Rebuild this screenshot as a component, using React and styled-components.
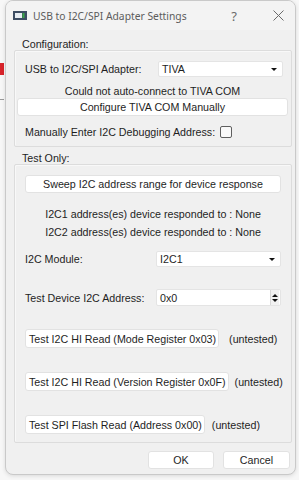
import styled, {createGlobalStyle} from "styled-components"

const Global = createGlobalStyle`
  html, body {
    margin: 0;
    padding: 0;
  }

  body {
    width: 299px;
    height: 480px;
    overflow: hidden;
    background:
      linear-gradient(#d8232a, #d8232a) 0 63px / 4px 12px no-repeat,
      linear-gradient(#9a9a9a, #9a9a9a) 0 99px / 4px 1px no-repeat,
      #f7f7f7;
    font-family: "Liberation Sans", Arial, sans-serif;
  }
`

const Window = styled.div`
  box-sizing: border-box;
  margin-left: 5px;
  width: 291px;
  height: 475px;
  display: flex;
  flex-direction: column;
  background: #f0f0f0;
  border: 1px solid #c9c9c9;
  border-radius: 8px;
  overflow: hidden;
  box-shadow: 0 1px 4px rgba(0, 0, 0, .12);
`

const TitleBar = styled.div`
  height: 29px;
  flex: none;
  display: flex;
  align-items: center;
  padding-left: 7px;
  background: #f3f3f3;
  color: #5c5c5c;
  font-family: "Noto Sans", "Open Sans", sans-serif;
  font-size: 10.3px;

  span.title {
    margin-left: 6px;
    flex: 1;
  }
`

const Caption = styled.button`
  width: ${p => p.$w}px;
  margin-right: ${p => p.$mr || 0}px;
  height: 29px;
  border: 0;
  padding: 0;
  background: transparent;
  color: #6a6a6a;
  font-family: "Noto Sans", sans-serif;
  font-size: 13px;
  display: flex;
  align-items: center;
  justify-content: center;
`

const Body = styled.div`
  flex: 1;
  display: flex;
  flex-direction: column;
  padding: 8px 3px 0 8px;
  font-size: 10.7px;
  color: #1e1e1e;
`

const GroupTitle = styled.div`
  height: 12px;
  line-height: 12px;
  padding-left: 8px;
  margin-top: ${p => p.$gap || 0}px;
`

const Frame = styled.div`
  box-sizing: border-box;
  height: ${p => p.$h}px;
  border: 1px solid #dcdcdc;
  box-shadow: inset 1px 1px 0 #f8f8f8;
  border-radius: 2px;
  display: flex;
  flex-direction: column;
  padding: ${p => p.$pad};
`

const Row = styled.div`
  display: flex;
  align-items: center;
  height: ${p => p.$h || 16}px;
  margin-top: ${p => p.$mt || 0}px;
  padding-left: ${p => p.$pl ?? 8}px;
`

const Label = styled.span`
  width: ${p => p.$w || 133}px;
  flex: none;
`

const Combo = styled.div`
  box-sizing: border-box;
  width: 125px;
  height: 16px;
  display: flex;
  align-items: center;
  justify-content: space-between;
  padding: 0 5px 0 3px;
  background: #fff;
  border: 1px solid #e4e4e4;
  border-radius: 2px;

  &::after {
    content: "";
    border-left: 3px solid transparent;
    border-right: 3px solid transparent;
    border-top: 3px solid #111;
  }
`

const Spin = styled.div`
  box-sizing: border-box;
  width: 125px;
  height: 17px;
  display: flex;
  align-items: center;
  padding-left: 3px;
  background: #fff;
  border: 1px solid #e4e4e4;
  border-radius: 2px;

  span {
    flex: 1;
  }
`

const SpinArrows = styled.div`
  box-sizing: border-box;
  width: 9px;
  height: 15px;
  margin-right: 1px;
  display: flex;
  flex-direction: column;
  align-items: center;
  justify-content: center;
  gap: 2px;
  background: #f1f1f1;
  border-left: 1px solid #d8d8d8;

  i {
    border-left: 3px solid transparent;
    border-right: 3px solid transparent;
  }

  i:first-child {
    border-bottom: 3px solid #111;
  }

  i:last-child {
    border-top: 3px solid #111;
  }
`

const Note = styled.div`
  text-align: center;
  line-height: ${p => p.$lh || 14}px;
  margin-top: ${p => p.$mt || 0}px;
`

const Button = styled.button`
  box-sizing: border-box;
  height: ${p => p.$h || 18}px;
  width: ${p => p.$w ? p.$w + "px" : "auto"};
  margin-top: ${p => p.$mt || 0}px;
  padding: ${p => p.$tight ? "0 2px 0 3px" : "0 4px"};
  background: #fff;
  border: 1px solid #e2e2e2;
  border-radius: 3px;
  font-family: inherit;
  font-size: inherit;
  color: #1e1e1e;
  text-align: center;
  white-space: nowrap;
  flex: none;
`

const Check = styled.span`
  box-sizing: border-box;
  width: 12px;
  height: 12px;
  margin-left: 5px;
  border: 1px solid #5f5f5f;
  border-radius: 2px;
  background: #f9f9f9;
`

const TestRow = styled.div`
  display: flex;
  align-items: center;
  gap: ${p => p.$gap || 10}px;
  margin-top: ${p => p.$mt}px;
`

const Footer = styled.div`
  display: flex;
  justify-content: flex-end;
  gap: 9px;
  margin-top: 8px;
  padding-right: 2px;
`

const AppIcon = () => (
    <svg width="14" height="9" viewBox="0 0 14 9">
        <rect x="0" y="0" width="14" height="9" fill="#3d4d63"/>
        <rect x="2" y="2" width="7" height="5" fill="#e7edf3"/>
        <rect x="9.5" y="2" width="2" height="5" fill="#3aa64a"/>
    </svg>
)

const tests = [
    {text: "Test I2C HI Read (Mode Register 0x03)", mt: 23, gap: 10},
    {text: "Test I2C HI Read (Version Register 0x0F)", mt: 24, gap: 6},
    {text: "Test SPI Flash Read (Address 0x00)", mt: 24, gap: 7},
]

const App = () => {
    return (<>
        <Global/>
        <Window>
            <TitleBar>
                <AppIcon/>
                <span className="title">USB to I2C/SPI Adapter Settings</span>
                <Caption $w={44} $mr={5}>?</Caption>
                <Caption $w={34}>
                    <svg width="11" height="11" viewBox="0 0 11 11">
                        <path d="M0.5 0.5 L10.5 10.5 M10.5 0.5 L0.5 10.5" stroke="#6a6a6a" strokeWidth="1"/>
                    </svg>
                </Caption>
            </TitleBar>
            <Body>
                <GroupTitle>Configuration:</GroupTitle>
                <Frame $h={97} $pad="10px 3px 0 2px">
                    <Row>
                        <Label>USB to I2C/SPI Adapter:</Label>
                        <Combo>TIVA</Combo>
                    </Row>
                    <Note $mt={7}>Could not auto-connect to TIVA COM</Note>
                    <Button $h={18}>Configure TIVA COM Manually</Button>
                    <Row $h={14} $mt={9}>
                        <span>Manually Enter I2C Debugging Address:</span>
                        <Check/>
                    </Row>
                </Frame>
                <GroupTitle $gap={5}>Test Only:</GroupTitle>
                <Frame $h={279} $pad="10px 10px 0 10px">
                    <Button $h={18}>Sweep I2C address range for device response</Button>
                    <Note $lh={18} $mt={12}>I2C1 address(es) device responded to : None</Note>
                    <Note $lh={18}>I2C2 address(es) device responded to : None</Note>
                    <Row $mt={10} $pl={0}>
                        <Label $w={131}>I2C Module:</Label>
                        <Combo>I2C1</Combo>
                    </Row>
                    <Row $h={17} $mt={22} $pl={0}>
                        <Label $w={131}>Test Device I2C Address:</Label>
                        <Spin>
                            <span>0x0</span>
                            <SpinArrows><i/><i/></SpinArrows>
                        </Spin>
                    </Row>
                    {tests.map(t => (
                        <TestRow key={t.text} $mt={t.mt} $gap={t.gap}>
                            <Button $h={19} $tight>{t.text}</Button>
                            <span>(untested)</span>
                        </TestRow>
                    ))}
                </Frame>
                <Footer>
                    <Button $w={66}>OK</Button>
                    <Button $w={67}>Cancel</Button>
                </Footer>
            </Body>
        </Window>
    </>)
}

export default App
